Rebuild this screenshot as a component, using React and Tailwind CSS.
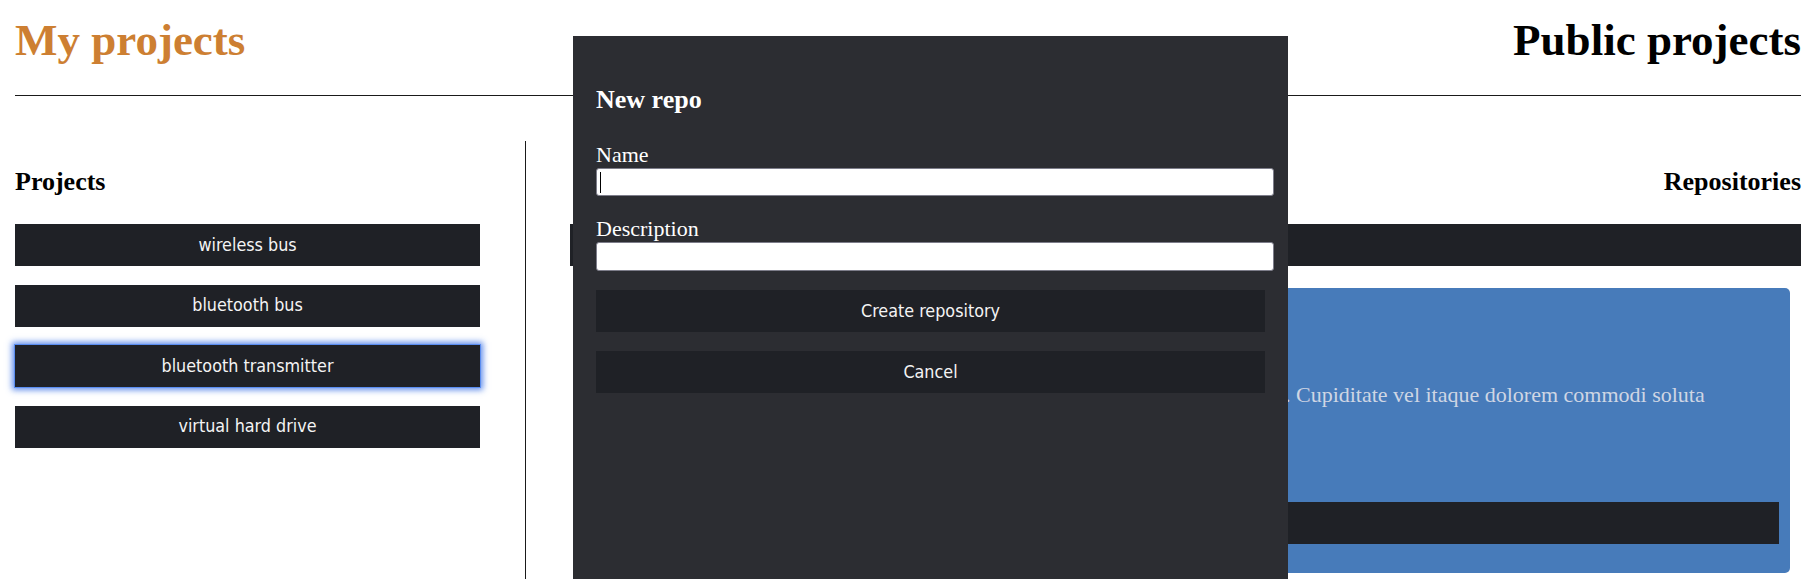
import React from 'react';

const projects = ['wireless bus', 'bluetooth bus', 'bluetooth transmitter', 'virtual hard drive'];

const btnClass =
  "flex h-[42px] w-full items-center justify-center bg-[#1f2126] text-[17.8px] text-[#f4f4f4] font-['DejaVu_Sans_Condensed','DejaVu_Sans',sans-serif] [font-stretch:condensed]";

const NewRepoDialog = () => {
  return (
    <div className="absolute left-[573px] top-[36px] h-[543px] w-[715px] bg-[#2c2d32] pl-[23px] pt-[49px] text-white">
      <h3 className="text-[26px] font-bold leading-[30px]">New repo</h3>

      <label className="mt-[27px] block text-[22px] leading-[26px]">Name</label>
      <div className="relative h-[28px] w-[678px]">
        <input className="h-full w-full rounded-[3px] border border-[#7d7d8a] bg-white outline-none" />
        <span className="absolute left-[4px] top-[4px] h-[21px] w-px bg-black" />
      </div>

      <label className="mt-[20px] block text-[22px] leading-[26px]">Description</label>
      <input className="block h-[29px] w-[678px] rounded-[3px] border border-[#7d7d8a] bg-white outline-none" />

      <div className="mt-[19px] flex w-[669px] flex-col gap-[19px]">
        <button className={btnClass}>Create repository</button>
        <button className={btnClass}>Cancel</button>
      </div>
    </div>
  );
};

export default function App() {
  return (
    <div className="relative h-[579px] overflow-hidden bg-white font-['Liberation_Serif',serif] text-black">
      <header className="flex items-start justify-between pl-[15px] pr-[18px] pt-[15px]">
        <h1 className="text-[45px] font-bold leading-[50px] text-[#cd7f32]">My projects</h1>
        <h1 className="text-[45px] font-bold leading-[50px]">Public projects</h1>
      </header>
      <hr className="ml-[15px] mr-[18px] mt-[30px] border-[#1a1a1a]" />

      <main className="mt-[45px] flex h-[438px] pl-[15px] pr-[18px]">
        <section className="w-[465px] shrink-0">
          <h3 className="mt-[26px] text-[26px] font-bold leading-[30px]">Projects</h3>
          <div className="mt-[27px] flex flex-col gap-[18.5px]">
            {projects.map((p, i) => (
              <button
                key={p}
                className={
                  btnClass +
                  (i === 2 ? ' ring-1 ring-[#5a8df0] shadow-[0_0_6px_3px_rgba(70,122,230,0.85)]' : '')
                }
              >
                {p}
              </button>
            ))}
          </div>
        </section>

        <div className="ml-[45px] w-px shrink-0 bg-[#1a1a1a]" />

        <section className="ml-[44px] flex-1">
          <h3 className="mt-[26px] text-right text-[26px] font-bold leading-[30px]">Repositories</h3>
          <button className={'mt-[27px] ' + btnClass}>New repository</button>

          <div className="mx-[11px] mt-[22px] flex h-[285px] flex-col rounded-[5px] bg-[#477bba] px-[11px] pt-[94px] text-center">
            <p className="pr-[10px] text-[22px] leading-[25px] text-[#cfd6e4]">
              Lorem ipsum dolor sit amet consectetur adipisicing elit. Repellat, nobis. Cupiditate vel itaque dolorem commodi soluta
            </p>
            <button className={'mt-[95px] h-[41px] ' + btnClass}>Open</button>
          </div>
        </section>
      </main>

      <NewRepoDialog />
    </div>
  );
}
